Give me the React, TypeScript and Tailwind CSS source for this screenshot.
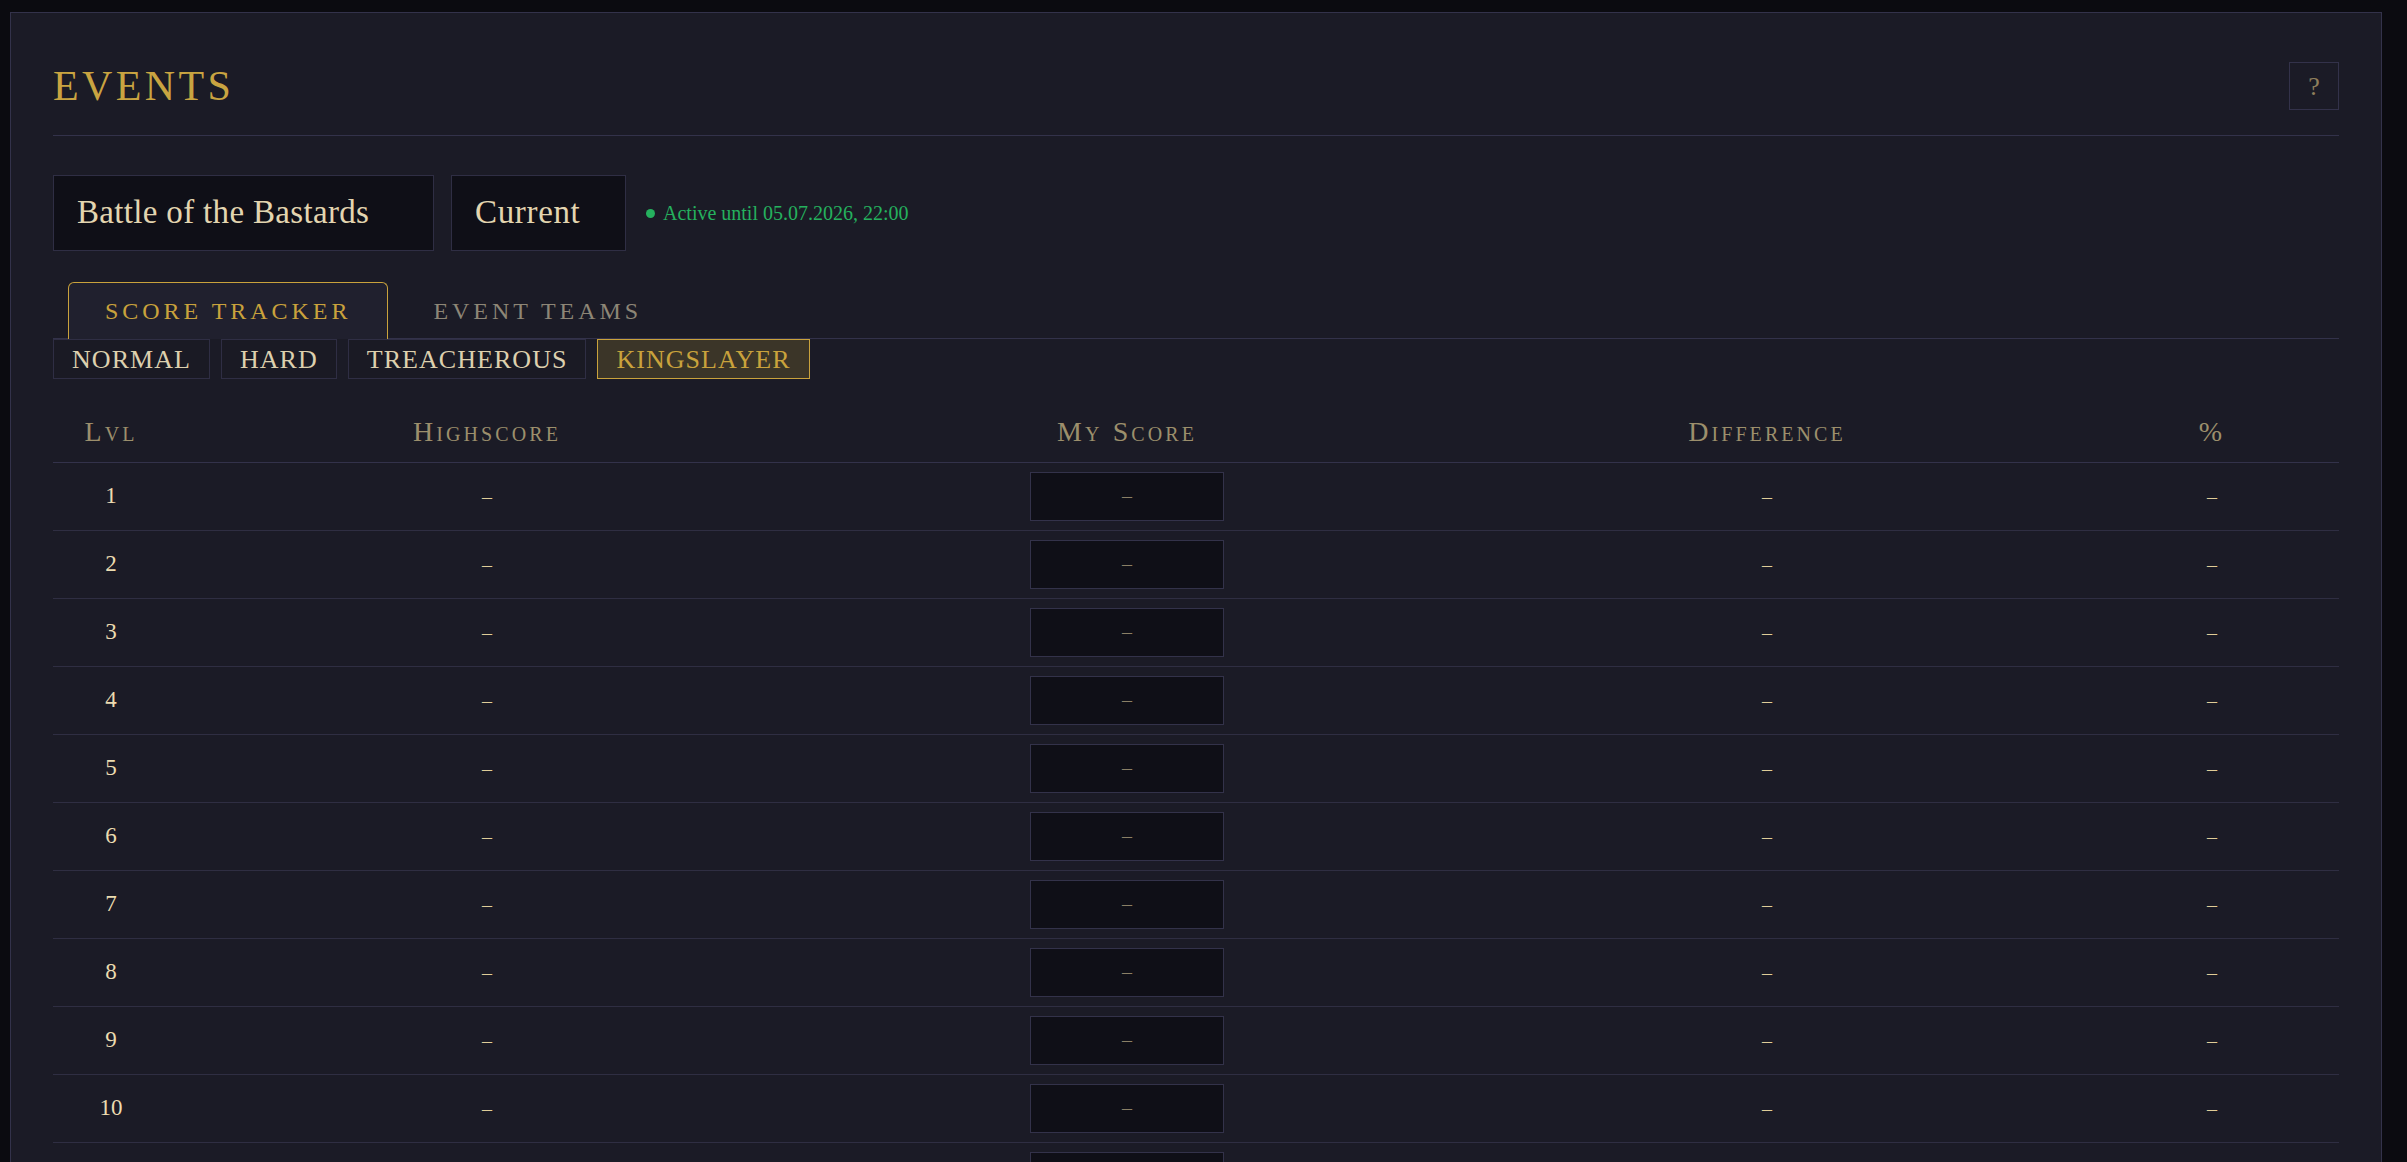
import { useState } from 'react';

const difficulties = ['Normal', 'Hard', 'Treacherous', 'Kingslayer'];
const levels = Array.from({ length: 11 }, (_, i) => i + 1);

const Header = () => (
  <div className="flex items-center justify-between border-b border-[#33324a] pb-[25px]">
    <h1 className="text-[42px] leading-[48px] tracking-[0.08em] text-[#c9a441]">EVENTS</h1>
    <button className="flex h-12 w-[50px] items-center justify-center border border-[#33324a] text-[26px] text-[#8f7f5c]">
      ?
    </button>
  </div>
);

const EventPicker = () => (
  <div className="mt-[39px] flex items-center">
    <div className="flex h-[76px] w-[381px] items-center border border-[#2f2e44] bg-[#0f0f17] pl-[23px] text-[33px] tracking-[0.01em] text-[#e3d5b0]">
      Battle of the Bastards
    </div>
    <div className="ml-[17px] flex h-[76px] w-[175px] items-center border border-[#2f2e44] bg-[#0f0f17] pl-[23px] text-[33px] tracking-[0.02em] text-[#e3d5b0]">
      Current
    </div>
    <div className="ml-5 flex items-center gap-2 text-[20px] text-[#25b15e]">
      <span className="h-[9px] w-[9px] rounded-full bg-[#25b15e]" />
      Active until 05.07.2026, 22:00
    </div>
  </div>
);

const Tabs = ({ tab, setTab }: { tab: string; setTab: (t: string) => void }) => (
  <div className="mt-[31px] flex gap-2 border-b border-[#33324a] pl-[15px]">
    {['Score Tracker', 'Event Teams'].map((t) => (
      <button
        key={t}
        onClick={() => setTab(t)}
        className={
          tab === t
            ? '-mb-px flex h-[57px] items-center rounded-t-[6px] border border-b-0 border-[#c9a23c] bg-[#20202e] px-9 text-[24px] uppercase tracking-[0.165em] text-[#c9a23c]'
            : '-mb-px flex h-[57px] items-center border border-b-0 border-transparent px-9 text-[24px] uppercase tracking-[0.165em] text-[#8d8676]'
        }
      >
        {t}
      </button>
    ))}
  </div>
);

const DifficultyBar = ({ active, setActive }: { active: string; setActive: (d: string) => void }) => (
  <div className="flex gap-[11px]">
    {difficulties.map((d) => (
      <button
        key={d}
        onClick={() => setActive(d)}
        className={
          active === d
            ? 'flex h-10 items-center border border-[#c9a23c] bg-[#3b3528] px-[18px] text-[26px] uppercase tracking-[0.04em] text-[#c9a23c]'
            : 'flex h-10 items-center border border-[#2f2e44] bg-[#1a1a24] px-[18px] text-[26px] uppercase tracking-[0.04em] text-[#ddd0ae]'
        }
      >
        {d}
      </button>
    ))}
  </div>
);

const cols = 'grid grid-cols-[116px_636px_644px_636px_1fr]';

const ScoreTable = () => (
  <div className="mt-[23px]">
    <div className={`${cols} h-[61px] items-center border-b border-[#33324a] text-center text-[28px] tracking-[0.11em] text-[#9c8f6c] [font-variant-caps:small-caps]`}>
      <div>Lvl</div>
      <div>Highscore</div>
      <div>My Score</div>
      <div>Difference</div>
      <div>%</div>
    </div>
    {levels.map((lvl) => (
      <div key={lvl} className={`${cols} h-[68px] items-center border-b border-[#2f2e42] text-center`}>
        <div className="text-[23px] text-[#ecdcb0]">{lvl}</div>
        <div className="text-[20px] text-[#e0cd98]">–</div>
        <div className="flex justify-center">
          <input
            placeholder="–"
            className="h-[49px] w-[194px] border border-[#33324a] bg-[#0f0f17] text-center text-[20px] text-[#e0cd98] outline-none placeholder:text-[#8a7f66]"
          />
        </div>
        <div className="text-[20px] text-[#e0cd98]">–</div>
        <div className="text-[20px] text-[#e0cd98]">–</div>
      </div>
    ))}
  </div>
);

export default function App() {
  const [tab, setTab] = useState('Score Tracker');
  const [difficulty, setDifficulty] = useState('Kingslayer');

  return (
    <div className="h-screen overflow-hidden bg-[#0b0b10] pl-[10px] pr-[25px] pt-3 font-['Liberation_Serif',serif]">
      <div className="min-h-full border border-[#33324a] bg-[#1b1b26] px-[42px] pt-[49px]">
        <Header />
        <EventPicker />
        <Tabs tab={tab} setTab={setTab} />
        <DifficultyBar active={difficulty} setActive={setDifficulty} />
        <ScoreTable />
      </div>
    </div>
  );
}
